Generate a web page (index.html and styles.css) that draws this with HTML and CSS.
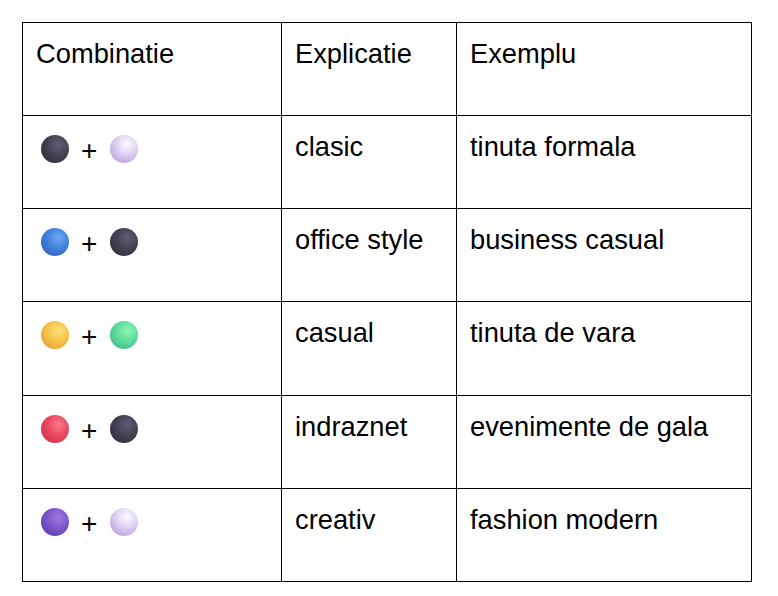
FILE: index.html
```html
<!DOCTYPE html>
<html>
<head>
<meta charset="utf-8">
<link rel="stylesheet" href="styles.css">
</head>
<body>
<div class="grid">
  <div class="cell">Combinatie</div>
  <div class="cell">Explicatie</div>
  <div class="cell">Exemplu</div>

  <div class="cell"><div class="combo"><span class="ball dark"></span><span class="plus">+</span><span class="ball lilac"></span></div></div>
  <div class="cell">clasic</div>
  <div class="cell">tinuta formala</div>

  <div class="cell"><div class="combo"><span class="ball blue"></span><span class="plus">+</span><span class="ball dark"></span></div></div>
  <div class="cell">office style</div>
  <div class="cell">business casual</div>

  <div class="cell"><div class="combo"><span class="ball yellow"></span><span class="plus">+</span><span class="ball green"></span></div></div>
  <div class="cell">casual</div>
  <div class="cell">tinuta de vara</div>

  <div class="cell"><div class="combo"><span class="ball red"></span><span class="plus">+</span><span class="ball dark"></span></div></div>
  <div class="cell">indraznet</div>
  <div class="cell">evenimente de gala</div>

  <div class="cell"><div class="combo"><span class="ball purple"></span><span class="plus">+</span><span class="ball lilac"></span></div></div>
  <div class="cell">creativ</div>
  <div class="cell">fashion modern</div>
</div>
</body>
</html>
```

FILE: styles.css
```css
html, body {
  margin: 0;
  padding: 0;
  background: #ffffff;
}

body {
  font-family: "Liberation Sans", Arial, sans-serif;
  font-size: 27.3px;
  color: #000000;
}

.grid {
  margin: 22px 0 0 22px;
  display: grid;
  grid-template-columns: 259px 175px 295px;
  grid-template-rows: 93px 93px 93px 94px 93px 93px;
  width: 729px;
  border-left: 1px solid #000;
  border-top: 1px solid #000;
}

.cell {
  border-right: 1px solid #000;
  border-bottom: 1px solid #000;
  padding: 15px 12px 0 13px;
  line-height: 31px;
  white-space: nowrap;
}

.combo {
  display: flex;
  align-items: flex-start;
  margin-top: 4px;
  margin-left: 5px;
}

.ball {
  display: block;
  width: 28px;
  height: 28px;
  border-radius: 50%;
  flex: none;
}

.plus {
  display: block;
  margin: 0 13px 0 12px;
  line-height: 31px;
  font-size: 28px;
}

.dark {
  background: radial-gradient(circle at 62% 35%, #625c74 0%, #444052 45%, #2b2834 100%);
}

.lilac {
  background: radial-gradient(circle at 60% 32%, #fbfaff 0%, #e4d9f4 35%, #c2abe3 75%, #9e82cb 100%);
}

.blue {
  background: radial-gradient(circle at 62% 35%, #6ea9ee 0%, #3f80dc 45%, #2f56b5 100%);
}

.yellow {
  background: radial-gradient(circle at 62% 35%, #fde07a 0%, #f6c446 45%, #de8c35 100%);
}

.green {
  background: radial-gradient(circle at 62% 35%, #8cf5b8 0%, #5ddb99 45%, #3aa88b 100%);
}

.red {
  background: radial-gradient(circle at 62% 35%, #f77a8a 0%, #ea4660 45%, #c42a45 100%);
}

.purple {
  background: radial-gradient(circle at 62% 35%, #9c7be0 0%, #7a55c9 45%, #5a35a6 100%);
}
```
